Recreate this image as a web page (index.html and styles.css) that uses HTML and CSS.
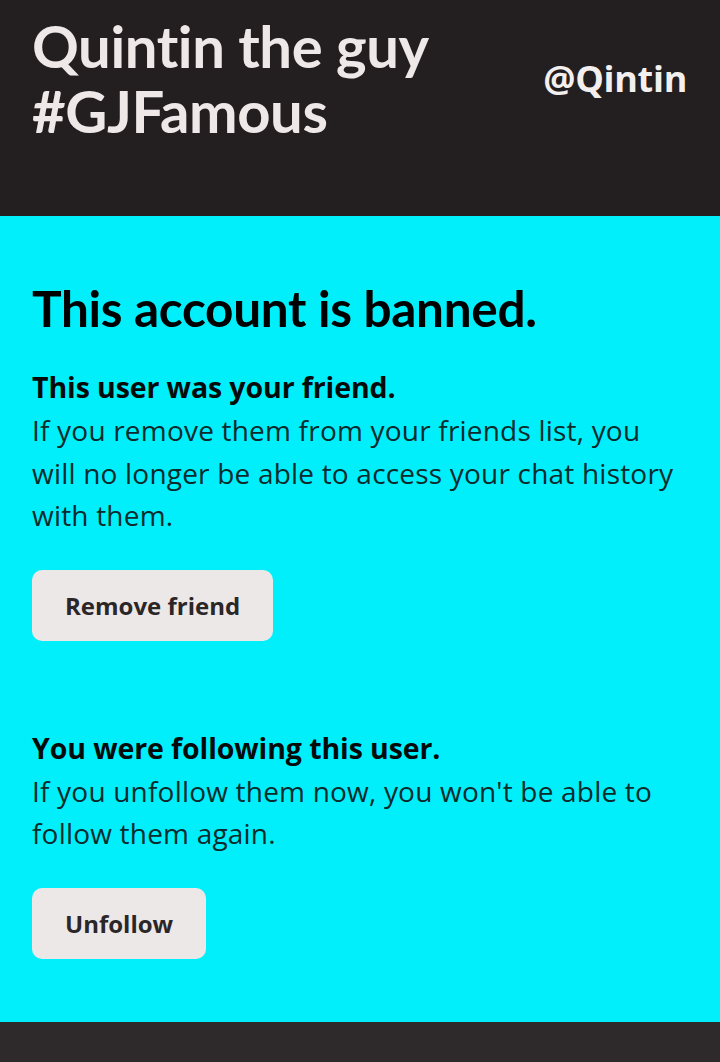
FILE: index.html
```html
<!DOCTYPE html>
<html lang="en">
<head>
<meta charset="utf-8">
<title>Quintin the guy</title>
<link rel="stylesheet" href="styles.css">
</head>
<body>
<header class="profile-header">
  <h1 class="profile-name">Quintin the guy<br>#GJFamous</h1>
  <div class="profile-handle">@Qintin</div>
</header>
<main class="banned">
  <h2 class="banned-title">This account is banned.</h2>
  <section class="notice">
    <h3 class="notice-title">This user was your friend.</h3>
    <p class="notice-text">If you remove them from your friends list, you<br>will no longer be able to access your chat history<br>with them.</p>
    <button class="action-btn" type="button">Remove friend</button>
  </section>
  <section class="notice notice-follow">
    <h3 class="notice-title">You were following this user.</h3>
    <p class="notice-text">If you unfollow them now, you won't be able to<br>follow them again.</p>
    <button class="action-btn" type="button">Unfollow</button>
  </section>
</main>
<footer class="page-footer"></footer>
</body>
</html>
```
FILE: styles.css
```css
html, body {
  margin: 0;
  padding: 0;
}
body {
  background: #231f20;
  font-family: "Open Sans", "Noto Sans", sans-serif;
  width: 720px;
  height: 1062px;
  overflow: hidden;
}
.profile-header {
  background: #231f20;
  height: 216px;
  box-sizing: border-box;
  padding: 13px 33px 0 32px;
  display: flex;
  justify-content: space-between;
  align-items: flex-start;
}
.profile-name {
  margin: 0;
  font-family: "Lato", sans-serif;
  font-weight: 700;
  font-size: 58px;
  line-height: 65px;
  color: #eee8e8;
  letter-spacing: -0.4px;
}
.profile-handle {
  margin-top: 41px;
  font-family: "Open Sans", sans-serif;
  font-weight: 700;
  font-size: 36px;
  color: #f4efef;
  letter-spacing: -0.3px;
}
.banned {
  background: #00effb;
  height: 806px;
  box-sizing: border-box;
  padding: 64px 20px 0 32px;
  color: #000;
}
.banned-title {
  margin: 0;
  font-family: "Lato", sans-serif;
  font-weight: 700;
  font-size: 49.5px;
  line-height: 56px;
  letter-spacing: -0.3px;
}
.notice {
  margin-top: 33px;
}
.notice-follow {
  margin-top: 89px;
}
.notice-title {
  margin: 0;
  font-weight: 700;
  font-size: 28.5px;
  line-height: 36px;
  color: #050a0a;
  letter-spacing: -0.1px;
}
.notice-text {
  margin: 4px 0 0 0;
  font-weight: 400;
  font-size: 28px;
  line-height: 42.5px;
  color: #0b2b2d;
  letter-spacing: 0.2px;
  white-space: nowrap;
}
.action-btn {
  display: block;
  margin-top: 33px;
  border: none;
  border-radius: 10px;
  background: #ede8e8;
  color: #2b2627;
  font-family: "Open Sans", sans-serif;
  font-weight: 700;
  font-size: 24px;
  height: 71px;
  padding: 0 33px 0 33px;
}
.page-footer {
  height: 40px;
  background: #2e2a2b;
}
```
